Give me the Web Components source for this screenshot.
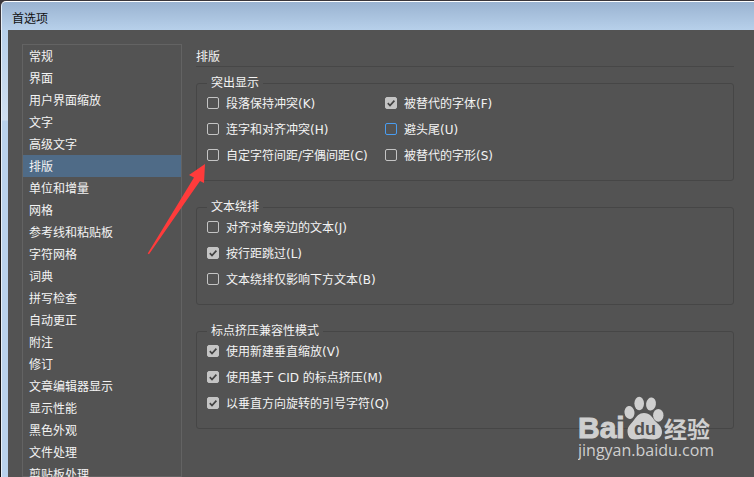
<!DOCTYPE html>
<html lang="zh-CN">
<head>
<meta charset="utf-8">
<title>首选项</title>
<style>
  body {
    margin: 0;
    height: 100vh;
    overflow: hidden;
    background: linear-gradient(#3a363b 30px, #131316 30px);
    color: #f4f4f4;
    font: 12px/16px "DejaVu Sans", "Noto Sans CJK SC", sans-serif;
  }
</style>
</head>
<body>
<pref-window heading="首选项">
  <pref-list slot="side">
    <pref-item>常规</pref-item>
    <pref-item>界面</pref-item>
    <pref-item>用户界面缩放</pref-item>
    <pref-item>文字</pref-item>
    <pref-item>高级文字</pref-item>
    <pref-item selected>排版</pref-item>
    <pref-item>单位和增量</pref-item>
    <pref-item>网格</pref-item>
    <pref-item>参考线和粘贴板</pref-item>
    <pref-item>字符网格</pref-item>
    <pref-item>词典</pref-item>
    <pref-item>拼写检查</pref-item>
    <pref-item>自动更正</pref-item>
    <pref-item>附注</pref-item>
    <pref-item>修订</pref-item>
    <pref-item>文章编辑器显示</pref-item>
    <pref-item>显示性能</pref-item>
    <pref-item>黑色外观</pref-item>
    <pref-item>文件处理</pref-item>
    <pref-item>剪贴板处理</pref-item>
  </pref-list>

  <pref-panel heading="排版">
    <pref-group heading="突出显示">
      <pref-check>段落保持冲突(K)</pref-check>
      <pref-check checked>被替代的字体(F)</pref-check>
      <pref-check>连字和对齐冲突(H)</pref-check>
      <pref-check current>避头尾(U)</pref-check>
      <pref-check>自定字符间距/字偶间距(C)</pref-check>
      <pref-check>被替代的字形(S)</pref-check>
    </pref-group>
    <pref-group heading="文本绕排" single>
      <pref-check>对齐对象旁边的文本(J)</pref-check>
      <pref-check checked>按行距跳过(L)</pref-check>
      <pref-check>文本绕排仅影响下方文本(B)</pref-check>
    </pref-group>
    <pref-group heading="标点挤压兼容性模式" single>
      <pref-check checked>使用新建垂直缩放(V)</pref-check>
      <pref-check checked>使用基于 CID 的标点挤压(M)</pref-check>
      <pref-check checked>以垂直方向旋转的引号字符(Q)</pref-check>
    </pref-group>
  </pref-panel>
</pref-window>
<pointer-arrow></pointer-arrow>
<site-mark></site-mark>

<script>
// Attach an open shadow root and fill it with the given markup
function render (el, html) {
  el.attachShadow({ mode: 'open' }).innerHTML = html;
}

/**
 * Dialog window: title bar, side column and content area
 */
class PrefWindow extends HTMLElement {
  constructor () {
    super();
    render(this, `
      <style>
        :host {
          box-sizing: border-box;
          display: flex;
          flex-direction: column;
          height: 100vh;
          margin-left: 1px;
          padding-top: 1px;
        }
        .frame {
          box-sizing: border-box;
          flex: 1;
          min-height: 0;
          display: flex;
          flex-direction: column;
          padding-left: 6px;
          border-top: 1px solid #fff;
          border-left: 1px solid #e8f0f8;
          border-radius: 5px 0 0 0;
          background: linear-gradient(#9ab3d1, #b7d0ea 28px, #cfdff0 118px, #b9d2ec 119px);
        }
        h1 {
          margin: 0;
          padding: 9px 4px 3px;
          color: #111;
          font-size: 12px;
          font-weight: 400;
          line-height: 16px;
        }
        .body {
          flex: 1;
          min-height: 0;
          display: flex;
          gap: 14px;
          padding: 14px 20px 0 14px;
          background: #535353;
          overflow: hidden;
        }
      </style>
      <div class="frame">
        <h1>${this.getAttribute('heading')}</h1>
        <div class="body">
          <slot name="side"></slot>
          <slot></slot>
        </div>
      </div>
    `);
  }
}
customElements.define('pref-window', PrefWindow);

/**
 * Category list on the left
 */
class PrefList extends HTMLElement {
  constructor () {
    super();
    render(this, `
      <style>
        :host {
          display: block;
          flex: 0 0 158px;
          border: 1px solid #636363;
        }
      </style>
      <nav><slot></slot></nav>
    `);
  }
}
customElements.define('pref-list', PrefList);

class PrefItem extends HTMLElement {
  constructor () {
    super();
    render(this, `
      <style>
        :host { display: block; }
        button {
          display: block;
          width: 100%;
          padding: 4px 6px 2px;
          border: 0;
          background: none;
          color: inherit;
          font: inherit;
          line-height: 16px;
          text-align: left;
          white-space: nowrap;
        }
        :host([selected]) button { background: #4f6b87; }
      </style>
      <button type="button"><slot></slot></button>
    `);
  }
}
customElements.define('pref-item', PrefItem);

/**
 * Content area with its heading and rule
 */
class PrefPanel extends HTMLElement {
  constructor () {
    super();
    render(this, `
      <style>
        :host { display: block; flex: 1; min-width: 0; }
        h2 {
          margin: 0 0 8px;
          padding: 5px 0 1px;
          border-bottom: 1px solid #474747;
          font-size: 12px;
          font-weight: 400;
          line-height: 16px;
        }
        .groups { display: flex; flex-direction: column; gap: 18px; }
      </style>
      <h2>${this.getAttribute('heading')}</h2>
      <div class="groups"><slot></slot></div>
    `);
  }
}
customElements.define('pref-panel', PrefPanel);

/**
 * Titled box of check boxes, two columns unless "single" is set
 */
class PrefGroup extends HTMLElement {
  constructor () {
    super();
    render(this, `
      <style>
        :host { display: block; }
        fieldset {
          margin: 0;
          padding: 4px 10px 17px;
          border: 1px solid #464646;
          border-radius: 3px;
          min-width: 0;
        }
        legend { padding: 0 4px; line-height: 16px; }
        .rows {
          display: grid;
          grid-template-columns: 178px 1fr;
          row-gap: 10px;
        }
        :host([single]) .rows { grid-template-columns: 1fr; }
      </style>
      <fieldset>
        <legend>${this.getAttribute('heading')}</legend>
        <div class="rows"><slot></slot></div>
      </fieldset>
    `);
  }
}
customElements.define('pref-group', PrefGroup);

class PrefCheck extends HTMLElement {
  constructor () {
    super();
    const checked = this.hasAttribute('checked') ? 'checked' : '';
    render(this, `
      <style>
        :host { display: block; }
        label {
          display: flex;
          align-items: flex-start;
          gap: 7px;
          line-height: 16px;
          height: 16px;
          white-space: nowrap;
        }
        span { padding-top: 1px; }
        input {
          appearance: none;
          box-sizing: border-box;
          flex: none;
          width: 12px;
          height: 12px;
          margin: 2px 0;
          border: 1px solid #c4c4c4;
          border-radius: 2px;
        }
        input:checked {
          background: #c4c4c4 url("data:image/svg+xml,%3Csvg xmlns='http://www.w3.org/2000/svg' viewBox='0 0 10 10'%3E%3Cpath d='M1.8 5.2 4 7.5 8.4 2.6' fill='none' stroke='%23434343' stroke-width='1.7'/%3E%3C/svg%3E") center / 10px no-repeat;
        }
        :host([current]) input { border-color: #4a9df0; }
      </style>
      <label><input type="checkbox" ${checked}><span><slot></slot></span></label>
    `);
  }
}
customElements.define('pref-check', PrefCheck);

// Red arrow laid over the dialog
class PointerArrow extends HTMLElement {
  constructor () {
    super();
    render(this, `
      <style>
        :host { position: absolute; left: 147px; top: 163px; }
        svg { display: block; }
      </style>
      <svg width="60" height="92" viewBox="0 0 60 92" aria-hidden="true">
        <path d="M58 1 42 12 47 14.500 0.700 90.500 2 91.300 53 18 57 20Z" fill="#ff3b3b"/>
      </svg>
    `);
  }
}
customElements.define('pointer-arrow', PointerArrow);

// Site logo in the bottom right corner
class SiteMark extends HTMLElement {
  constructor () {
    super();
    render(this, `
      <style>
        :host { position: absolute; right: 38px; bottom: 11px; }
        svg { display: block; fill: #cfcfcf; }
        .bai { font: 700 30px "Liberation Sans", sans-serif; stroke: #cfcfcf; stroke-width: 1px; }
        .du { font: 700 18px "Liberation Sans", sans-serif; fill: #535353; }
        .cn { font: 700 23px "Noto Sans CJK SC", sans-serif; }
        .url { font: 16px "Open Sans", sans-serif; }
      </style>
      <svg width="138" height="70" viewBox="0 0 138 70" role="img" aria-label="Baidu">
        <text class="bai" x="0" y="42">Bai</text>
        <ellipse cx="51.500" cy="16.500" rx="5" ry="6.500" transform="rotate(-8 51.500 16.500)"/>
        <ellipse cx="61.200" cy="7.500" rx="4.800" ry="6.800"/>
        <ellipse cx="73" cy="8" rx="4.900" ry="6.600" transform="rotate(8 73 8)"/>
        <ellipse cx="80.300" cy="19.300" rx="5.200" ry="6.400"/>
        <path d="M66 17C72 17 74 21 77 25C80 28 84 30 84 36C84 41 80 43.500 75 43.500C71 43.500 69 42.500 66 42.500C63 42.500 61 43.500 57 43.500C52 43.500 49.500 40 49.500 35C49.500 30 53 28 56 24C59 20 61 17 66 17Z"/>
        <text class="du" x="56" y="39">du</text>
        <text class="cn" x="86" y="42">经验</text>
        <text class="url" x="0" y="60">jingyan.baidu.com</text>
      </svg>
    `);
  }
}
customElements.define('site-mark', SiteMark);
</script>
</body>
</html>
